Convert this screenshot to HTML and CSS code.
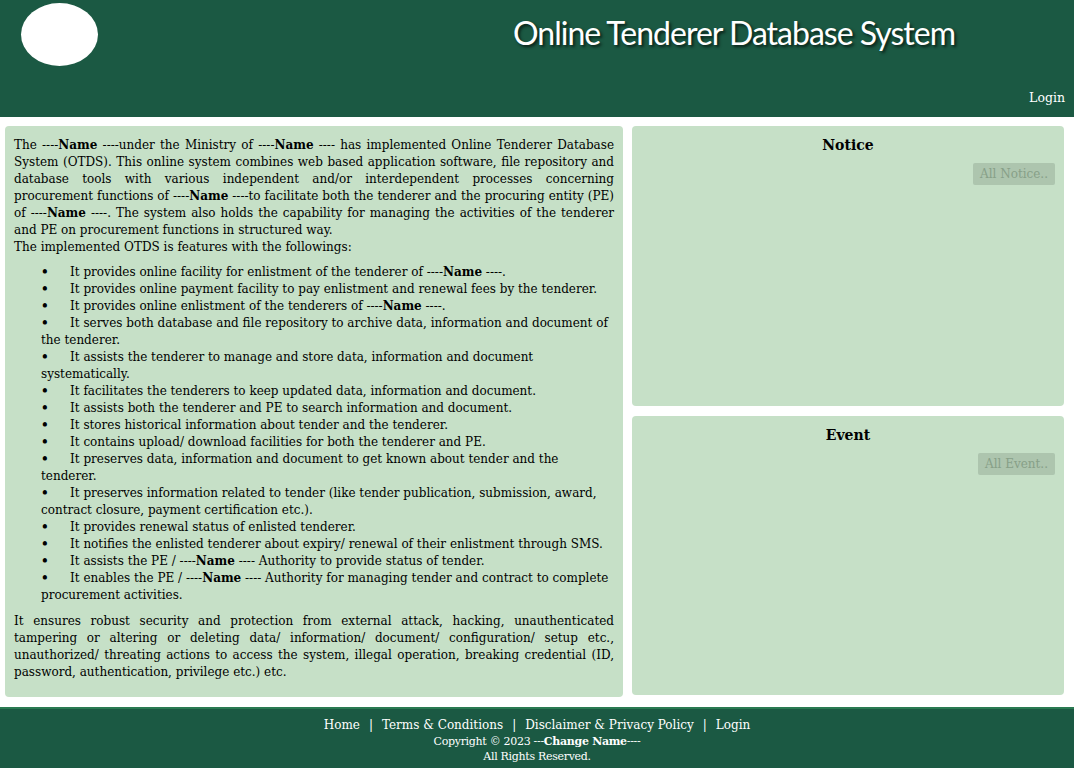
FILE: index.html
```html
<!DOCTYPE html>
<html lang="en">
<head>
<meta charset="utf-8">
<title>Online Tenderer Database System</title>
<link rel="stylesheet" href="styles.css">
</head>
<body>
<header class="site-header">
  <div class="header-top">
    <div class="logo"></div>
    <h1 class="site-title">Online Tenderer Database System</h1>
  </div>
  <nav class="header-nav"><a href="#">Login</a></nav>
</header>

<main class="main">
  <section class="panel about">
    <p class="intro">The ----<b>Name</b> ----under the Ministry of ----<b>Name</b> ---- has implemented Online Tenderer Database System (OTDS). This online system combines web based application software, file repository and database tools with various independent and/or interdependent processes concerning procurement functions of ----<b>Name</b> ----to facilitate both the tenderer and the procuring entity (PE) of ----<b>Name</b> ----. The system also holds the capability for managing the activities of the tenderer and PE on procurement functions in structured way.<br>The implemented OTDS is features with the followings:</p>
    <ul class="features">
      <li><span class="dot">•</span>It provides online facility for enlistment of the tenderer of ----<b>Name</b> ----.</li>
      <li><span class="dot">•</span>It provides online payment facility to pay enlistment and renewal fees by the tenderer.</li>
      <li><span class="dot">•</span>It provides online enlistment of the tenderers of ----<b>Name</b> ----.</li>
      <li><span class="dot">•</span>It serves both database and file repository to archive data, information and document of the tenderer.</li>
      <li><span class="dot">•</span>It assists the tenderer to manage and store data, information and document systematically.</li>
      <li><span class="dot">•</span>It facilitates the tenderers to keep updated data, information and document.</li>
      <li><span class="dot">•</span>It assists both the tenderer and PE to search information and document.</li>
      <li><span class="dot">•</span>It stores historical information about tender and the tenderer.</li>
      <li><span class="dot">•</span>It contains upload/ download facilities for both the tenderer and PE.</li>
      <li><span class="dot">•</span>It preserves data, information and document to get known about tender and the tenderer.</li>
      <li><span class="dot">•</span>It preserves information related to tender (like tender publication, submission, award, contract closure, payment certification etc.).</li>
      <li><span class="dot">•</span>It provides renewal status of enlisted tenderer.</li>
      <li><span class="dot">•</span>It notifies the enlisted tenderer about expiry/ renewal of their enlistment through SMS.</li>
      <li><span class="dot">•</span>It assists the PE / ----<b>Name</b> ---- Authority to provide status of tender.</li>
      <li><span class="dot">•</span>It enables the PE / ----<b>Name</b> ---- Authority for managing tender and contract to complete procurement activities.</li>
    </ul>
    <p class="closing">It ensures robust security and protection from external attack, hacking, unauthenticated tampering or altering or deleting data/ information/ document/ configuration/ setup etc., unauthorized/ threating actions to access the system, illegal operation, breaking credential (ID, password, authentication, privilege etc.) etc.</p>
  </section>

  <div class="side">
    <section class="panel box notice">
      <h2 class="box-title">Notice</h2>
      <div class="box-actions"><a class="btn" href="#">All Notice..</a></div>
    </section>
    <section class="panel box event">
      <h2 class="box-title">Event</h2>
      <div class="box-actions"><a class="btn" href="#">All Event..</a></div>
    </section>
  </div>
</main>

<footer class="site-footer">
  <nav class="footer-links">
    <a href="#">Home</a><span class="sep">|</span><a href="#">Terms &amp; Conditions</a><span class="sep">|</span><a href="#">Disclaimer &amp; Privacy Policy</a><span class="sep">|</span><a href="#">Login</a>
  </nav>
  <div class="copyright">Copyright © 2023 ---<b>Change Name</b>----</div>
  <div class="rights">All Rights Reserved.</div>
</footer>
</body>
</html>
```

FILE: styles.css
```css
* { box-sizing: border-box; }

html, body {
  margin: 0;
  padding: 0;
  background: #ffffff;
}

body {
  font-family: "DejaVu Serif", "Liberation Serif", serif;
  font-size: 12px;
  line-height: 17px;
  color: #000;
}

a { text-decoration: none; color: inherit; }

/* Header */
.site-header {
  background: #1b5943;
  height: 117px;
  padding: 3px 9px 0 21px;
  display: flex;
  flex-direction: column;
}

.header-top {
  display: flex;
  align-items: flex-start;
}

.logo {
  width: 77px;
  height: 63px;
  border-radius: 50%;
  background: #fff;
  flex: none;
}

.site-title {
  margin: 10px 0 0 415px;
  font-family: "Lato", "Open Sans", sans-serif;
  font-weight: 400;
  font-size: 32px;
  letter-spacing: -1px;
  line-height: 40px;
  color: #fff;
  text-shadow: 2px 2px 3px #0a1f17;
  white-space: nowrap;
}

.header-nav {
  margin-top: auto;
  margin-bottom: 11px;
  text-align: right;
  font-size: 12.5px;
  color: #fff;
}

/* Main */
.main {
  display: grid;
  grid-template-columns: 618px 432px;
  gap: 9px;
  padding: 9px 10px 0 5px;
}

.panel {
  background: #c6e0c7;
  border-radius: 4px;
}

.about {
  height: 571px;
  padding: 11px 9px 16px 9px;
}

.intro, .closing {
  margin: 0;
  text-align: justify;
}

.features {
  list-style: none;
  margin: 8px 0 9px 27px;
  padding: 0;
}

.dot {
  display: inline-block;
  width: 29px;
  font-weight: bold;
}

.side {
  display: flex;
  flex-direction: column;
  gap: 10px;
}

.box {
  padding: 9px 9px 0 9px;
}

.notice { height: 280px; }
.event { height: 279px; }

.box-title {
  margin: 0;
  text-align: center;
  font-size: 14px;
  line-height: 20px;
  font-weight: bold;
}

.box-actions {
  display: flex;
  justify-content: flex-end;
  margin-top: 8px;
}

.btn {
  background: #adc5ae;
  color: #87a088;
  border-radius: 2px;
  padding: 2px 7px;
  font-size: 12px;
  line-height: 18px;
}

/* Footer */
.site-footer {
  margin-top: 10px;
  background: #1b5943;
  border-top: 2px solid #2a7a52;
  height: 61px;
  color: #fff;
  text-align: center;
  padding-top: 7px;
}

.footer-links {
  font-size: 12px;
  line-height: 18px;
}

.sep {
  margin: 0 9px;
}

.copyright, .rights {
  font-size: 11px;
  line-height: 15px;
  letter-spacing: -0.3px;
  color: #ffffff;
}
```
